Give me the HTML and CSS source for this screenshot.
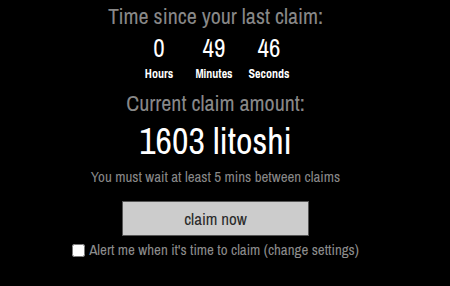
FILE: index.html
```html
<!DOCTYPE html>
<html>
<head>
<meta charset="utf-8">
<link rel="stylesheet" href="styles.css">
</head>
<body>
<div class="wrap">
  <div class="title">Time since your last claim:</div>
  <div class="timer">
    <div class="unit"><div class="num">0</div><div class="lbl">Hours</div></div>
    <div class="unit"><div class="num">49</div><div class="lbl">Minutes</div></div>
    <div class="unit"><div class="num">46</div><div class="lbl">Seconds</div></div>
  </div>
  <div class="title sub">Current claim amount:</div>
  <div class="amount">1603 litoshi</div>
  <div class="note">You must wait at least 5 mins between claims</div>
  <button class="btn">claim now</button>
  <label class="alert"><input type="checkbox" class="chk"> Alert me when it's time to claim (change settings)</label>
</div>
</body>
</html>
```
FILE: styles.css
```css
html, body { margin: 0; padding: 0; background: #000; }
body { width: 450px; height: 286px; overflow: hidden; font-family: "Archivo Narrow", "Roboto Condensed", sans-serif; }
.wrap { width: 431px; display: flex; flex-direction: column; align-items: center; padding-top: 4px; }
.title { color: #888; font-size: 22px; line-height: 24px; }
.timer { display: flex; margin-top: 8px; margin-left: -3px; }
.unit { display: flex; flex-direction: column; align-items: center; width: 55px; }
.num { color: #fff; font-size: 25px; line-height: 24px; }
.lbl { color: #fff; font-size: 12px; font-weight: bold; line-height: 14px; margin-top: 7px; }
.sub { margin-top: 10px; }
.amount { color: #fff; font-size: 36px; line-height: 40px; margin-top: 6px; }
.note { color: #888; font-size: 15px; line-height: 18px; margin-top: 7px; }
.btn { margin-top: 15px; width: 187px; height: 35px; background: #ccc; border: 1px solid #555; color: #2a2a2a; font-family: inherit; font-size: 17px; padding: 0; }
.alert { color: #8c8c8c; font-size: 15px; line-height: 18px; margin-top: 5px; display: flex; align-items: center; }
.chk { margin: 0 4px 0 0; width: 13px; height: 13px; }
```
